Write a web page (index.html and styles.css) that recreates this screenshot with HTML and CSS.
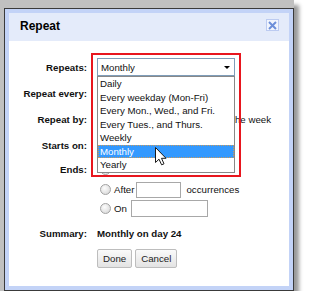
FILE: index.html
```html
<!doctype html>
<html>
    <head>
        <meta charset="utf-8" />
        <title>Repeat</title>
        <link rel="stylesheet" href="styles.css">
    </head>
    <body>
        <div class="shot">
            <div class="dialog">
                <div class="frame">
                    <div class="dialog-head">
                        <span class="dialog-title">Repeat</span>
                        <button class="close-btn" title="Close">
                            <svg width="9" height="9" viewBox="0 0 9 9">
                                <path d="M1 1 L8 8 M8 1 L1 8" stroke="#6d8fd9" stroke-width="2" fill="none" />
                            </svg>
                        </button>
                    </div>
                    <div class="dialog-body">
                        <div class="form">
                            <label class="field-label">Repeats:</label>
                            <div class="field">
                                <div class="combo">
                                    <div class="select">
                                        <span>Monthly</span>
                                        <span class="arrow"></span>
                                    </div>
                                    <ul class="options">
                                        <li>Daily</li>
                                        <li>Every weekday (Mon-Fri)</li>
                                        <li>Every Mon., Wed., and Fri.</li>
                                        <li>Every Tues., and Thurs.</li>
                                        <li>Weekly</li>
                                        <li class="selected">Monthly</li>
                                        <li>Yearly</li>
                                    </ul>
                                    <svg class="cursor" width="12" height="19" viewBox="0 0 12 19">
                                        <path d="M0.5 0.5 L0.5 15.5 L4 12.2 L6.6 17.8 L9 16.8 L6.5 11.3 L11 11.3 Z" fill="#fff" stroke="#1a1a1a" stroke-width="1" />
                                    </svg>
                                </div>
                            </div>

                            <label class="field-label">Repeat every:</label>
                            <div class="field">
                                <div class="select select-small">
                                    <span>1</span>
                                    <span class="arrow"></span>
                                </div>
                                <span class="after-text">months</span>
                            </div>

                            <label class="field-label">Repeat by:</label>
                            <div class="field">
                                <input type="radio" name="by" checked />
                                <span>day of the month</span>
                                <input type="radio" name="by" class="radio-next" />
                                <span>day of the week</span>
                            </div>

                            <label class="field-label">Starts on:</label>
                            <div class="field">
                                <input type="text" class="text-input date-input" value="8/24/2010" />
                            </div>

                            <label class="field-label">Ends:</label>
                            <div class="field">
                                <input type="radio" name="ends" checked />
                                <span>Never</span>
                            </div>

                            <div class="field field-indent">
                                <input type="radio" name="ends" />
                                <span>After</span>
                                <input type="text" class="text-input count-input" />
                                <span class="after-text">occurrences</span>
                            </div>

                            <div class="field field-indent">
                                <input type="radio" name="ends" />
                                <span>On</span>
                                <input type="text" class="text-input until-input" />
                            </div>

                            <label class="field-label">Summary:</label>
                            <div class="field summary">Monthly on day 24</div>

                            <div class="field field-indent buttons">
                                <button class="btn">Done</button>
                                <button class="btn">Cancel</button>
                            </div>
                        </div>
                    </div>
                </div>
            </div>
        </div>
    </body>
</html>
```

FILE: styles.css
```css
body {
    margin: 0;
    background: #fff;
    font-family: "Liberation Sans", Arial, sans-serif;
    font-size: 9.7px;
    color: #111;
}
.shot {
    width: 294px;
    height: 291px;
    box-sizing: border-box;
    padding: 8px 0 0 4px;
    background: #c0c0c0;
    box-shadow: 5px 5px 4px rgba(0, 0, 0, 0.4);
}
.dialog {
    width: 290px;
    height: 283px;
    box-sizing: border-box;
    border: 1px solid #3a3a3a;
}
.frame {
    height: 100%;
    box-sizing: border-box;
    border: 4px solid #c3d3f7;
    display: flex;
    flex-direction: column;
}
.dialog-head {
    display: flex;
    align-items: flex-start;
    height: 28px;
    box-sizing: border-box;
    padding: 6px 10px 0 11px;
    background: #e4ebfa;
}
.dialog-title {
    font-size: 12px;
    line-height: 14px;
    font-weight: bold;
    color: #000;
}
.close-btn {
    margin-left: auto;
    width: 13px;
    height: 12px;
    padding: 0;
    border: 1px solid #bccbf1;
    background: #f1f5fd;
    display: flex;
    align-items: center;
    justify-content: center;
    cursor: pointer;
}
.dialog-body {
    flex: 1;
    background: #fff;
}
.form {
    display: grid;
    grid-template-columns: 78px 1fr;
    grid-template-rows: 26px 26px 26px 26px 22px 19px 19px 30px 20px;
    column-gap: 10px;
    padding-top: 13px;
}
.field-label {
    align-self: center;
    text-align: right;
    font-weight: bold;
    white-space: nowrap;
}
.field {
    display: flex;
    align-items: center;
    white-space: nowrap;
}
.field-indent {
    grid-column: 2;
}
.combo {
    position: relative;
    z-index: 2;
    width: 138px;
    height: 18px;
}
.combo::after {
    content: "";
    position: absolute;
    left: -6px;
    top: -5px;
    width: 150px;
    height: 124px;
    box-sizing: border-box;
    border: 2px solid #e8161e;
    pointer-events: none;
}
.select {
    height: 18px;
    box-sizing: border-box;
    border: 1px solid #7f9db9;
    background: #fff;
    display: flex;
    align-items: center;
    justify-content: space-between;
    padding: 0 4px 0 3px;
}
.select-small {
    width: 36px;
}
.arrow {
    width: 0;
    height: 0;
    border-left: 3px solid transparent;
    border-right: 3px solid transparent;
    border-top: 3px solid #000;
}
.options {
    position: absolute;
    left: 0;
    top: 18px;
    width: 138px;
    box-sizing: border-box;
    margin: 0;
    padding: 0;
    list-style: none;
    border: 1px solid #888;
    background: #fff;
}
.options li {
    line-height: 13.5px;
    height: 13.5px;
    padding-left: 2px;
    box-sizing: border-box;
}
.options li.selected {
    background: #3399ff;
    color: #fff;
    outline: 1px dotted #c89a5e;
    outline-offset: -1px;
}
.cursor {
    position: absolute;
    left: 58px;
    top: 89px;
}
input[type="radio"] {
    appearance: none;
    width: 11px;
    height: 11px;
    margin: 0 3px 0 3px;
    box-sizing: border-box;
    border: 1px solid #a2a2a2;
    border-radius: 50%;
    background: radial-gradient(circle at 40% 35%, #fdfdfd, #d2d2d2);
}
input[type="radio"]:checked {
    background: radial-gradient(circle, #3d7a3d 0 2px, #f4f4f4 2.5px, #d2d2d2);
}
.radio-next {
    margin-left: 12px;
}
.text-input {
    height: 16px;
    box-sizing: border-box;
    margin: 0;
    padding: 0 2px;
    border: 1px solid #a8a8a8;
    font: inherit;
}
.count-input {
    width: 45px;
    margin-left: 2px;
}
.until-input {
    width: 77px;
    height: 17px;
    margin-left: 4px;
}
.date-input {
    width: 70px;
}
.after-text {
    margin-left: 5px;
}
.summary {
    font-weight: bold;
}
.buttons {
    align-items: flex-end;
    gap: 3px;
}
.btn {
    height: 19px;
    padding: 0 5px;
    border: 1px solid #bdbdbd;
    border-radius: 2px;
    background: linear-gradient(#fafafa, #e3e3e3);
    font: inherit;
    color: #222;
    cursor: pointer;
}
```
